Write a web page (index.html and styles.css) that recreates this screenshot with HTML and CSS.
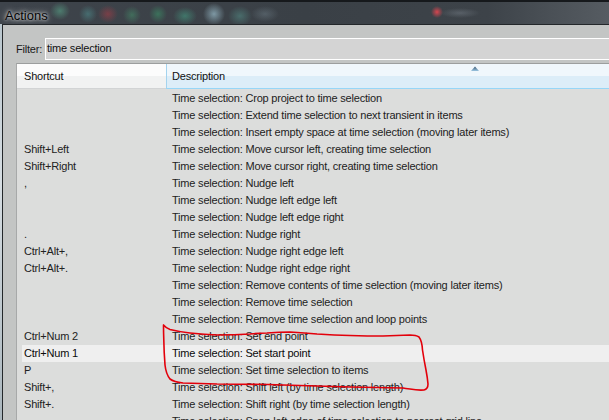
FILE: index.html
```html
<!DOCTYPE html>
<html>
<head>
<meta charset="utf-8">
<link rel="stylesheet" href="styles.css">
</head>
<body>
<div class="window">
  <div class="titlebar"><span class="title">Actions</span></div>
  <div class="frame">
    <div class="dialog">
      <div class="filter-row">
        <span class="filter-label">Filter:</span>
        <div class="filter-box">time selection</div>
      </div>
      <div class="list">
        <div class="list-header">
          <div class="hcell hcell-shortcut">Shortcut</div>
          <div class="hcell hcell-desc">Description
            <svg class="sort-arrow" width="8" height="5" viewBox="0 0 8 5"><defs><linearGradient id="ag" x1="0" y1="0" x2="0" y2="1"><stop offset="0" stop-color="#35536e"/><stop offset="1" stop-color="#9cc7e4"/></linearGradient></defs><polygon points="0,5 4,0.5 8,5" fill="url(#ag)"/></svg>
          </div>
        </div>
        <div class="rows">
          <div class="row"><span class="sc"></span><span class="ds">Time selection: Crop project to time selection</span></div>
          <div class="row"><span class="sc"></span><span class="ds">Time selection: Extend time selection to next transient in items</span></div>
          <div class="row"><span class="sc"></span><span class="ds">Time selection: Insert empty space at time selection (moving later items)</span></div>
          <div class="row"><span class="sc">Shift+Left</span><span class="ds">Time selection: Move cursor left, creating time selection</span></div>
          <div class="row"><span class="sc">Shift+Right</span><span class="ds">Time selection: Move cursor right, creating time selection</span></div>
          <div class="row"><span class="sc">,</span><span class="ds">Time selection: Nudge left</span></div>
          <div class="row"><span class="sc"></span><span class="ds">Time selection: Nudge left edge left</span></div>
          <div class="row"><span class="sc"></span><span class="ds">Time selection: Nudge left edge right</span></div>
          <div class="row"><span class="sc">.</span><span class="ds">Time selection: Nudge right</span></div>
          <div class="row"><span class="sc">Ctrl+Alt+,</span><span class="ds">Time selection: Nudge right edge left</span></div>
          <div class="row"><span class="sc">Ctrl+Alt+.</span><span class="ds">Time selection: Nudge right edge right</span></div>
          <div class="row"><span class="sc"></span><span class="ds">Time selection: Remove contents of time selection (moving later items)</span></div>
          <div class="row"><span class="sc"></span><span class="ds">Time selection: Remove time selection</span></div>
          <div class="row"><span class="sc"></span><span class="ds">Time selection: Remove time selection and loop points</span></div>
          <div class="row"><span class="sc">Ctrl+Num 2</span><span class="ds">Time selection: Set end point</span></div>
          <div class="row row-selected"><span class="sc">Ctrl+Num 1</span><span class="ds">Time selection: Set start point</span></div>
          <div class="row"><span class="sc">P</span><span class="ds">Time selection: Set time selection to items</span></div>
          <div class="row"><span class="sc">Shift+,</span><span class="ds">Time selection: Shift left (by time selection length)</span></div>
          <div class="row"><span class="sc">Shift+.</span><span class="ds">Time selection: Shift right (by time selection length)</span></div>
          <div class="row"><span class="sc"></span><span class="ds">Time selection: Snap left edge of time selection to nearest grid line</span></div>
        </div>
      </div>
    </div>
  </div>
</div>
<svg class="annotation" width="609" height="420" viewBox="0 0 609 420">
  <path d="M163.5,325 Q166,328 170,329.5 Q180,332 190,333 Q205,334.5 217,335 Q235,335 250,334 Q260,333 267,333 Q280,332 290,332 Q305,333 317,334 Q335,335 350,335.5 Q368,336 383,336 Q398,335.5 410,335 Q416,335 419,337 Q422,341 422.5,350 Q424,360 426,370 Q427.5,378 428,384 Q428,389 424,390 Q418,390.5 410,389 Q405,388.5 403,388 Q380,387.5 350,387 Q318,386 283,385 Q250,384 217,384 Q200,383.5 183,383 Q174,382 170,379 Q166,374 165,365 Q164,352 163.8,340 Q163.5,331 163.5,325" fill="none" stroke="#e3000b" stroke-width="1.6" stroke-linecap="round" stroke-linejoin="round"/>
</svg>
</body>
</html>
```
FILE: styles.css
```css
html, body {
  margin: 0;
  padding: 0;
}
body {
  width: 609px;
  height: 420px;
  overflow: hidden;
  position: relative;
  background: #3a4047;
  font-family: "Liberation Sans", Arial, sans-serif;
}
.window {
  display: flex;
  flex-direction: column;
  height: 420px;
  overflow: hidden;
}
.titlebar {
  flex: none;
  box-sizing: border-box;
  height: 24px;
  border-top: 2px solid #16191c;
  display: flex;
  align-items: center;
  padding-left: 5px;
  padding-top: 4px;
  background:
    radial-gradient(ellipse 10px 9px at 60px 9px, rgba(90,170,140,0.55), transparent),
    radial-gradient(ellipse 9px 9px at 88px 12px, rgba(80,150,150,0.5), transparent),
    radial-gradient(ellipse 10px 9px at 108px 12px, rgba(170,60,70,0.55), transparent),
    radial-gradient(ellipse 9px 9px at 132px 13px, rgba(70,150,110,0.5), transparent),
    radial-gradient(ellipse 9px 9px at 158px 12px, rgba(60,160,110,0.5), transparent),
    radial-gradient(ellipse 12px 9px at 185px 14px, rgba(70,170,140,0.5), transparent),
    radial-gradient(ellipse 11px 11px at 214px 12px, rgba(170,210,225,0.6), transparent),
    radial-gradient(ellipse 12px 10px at 240px 14px, rgba(90,160,150,0.45), transparent),
    radial-gradient(ellipse 14px 8px at 265px 12px, rgba(130,150,160,0.35), transparent),
    radial-gradient(ellipse 6px 6px at 437px 10px, rgba(230,70,80,0.9), transparent),
    radial-gradient(ellipse 20px 5px at 460px 11px, rgba(140,150,160,0.35), transparent),
    linear-gradient(to right, #3e444b 0%, #3a4046 50%, #3d4349 80%, #565c62 100%);
}
.title {
  font-size: 13px;
  color: #050505;
  text-shadow: 0 0 6px rgba(255,255,255,0.9), 0 0 3px rgba(255,255,255,0.8);
}
.frame {
  flex: 1;
  min-height: 0;
  display: flex;
  padding-left: 2px;
  overflow: hidden;
  background: linear-gradient(to bottom, #b9c6cd, #d6dde2 40%, #aab6bd);
}
.dialog {
  flex: 1;
  min-height: 0;
  display: flex;
  flex-direction: column;
  overflow: hidden;
  border-left: 1px solid #23272a;
  border-top: 1px solid #23272a;
  background: #c3c5c4;
  padding-top: 13px;
  font-size: 11px;
  letter-spacing: -0.2px;
  color: #1a1a1a;
}
.filter-row {
  flex: none;
  display: flex;
  align-items: center;
  height: 22px;
  padding-left: 13px;
}
.filter-label {
  width: 29px;
  color: #1a1a1a;
}
.filter-box {
  flex: 1;
  box-sizing: border-box;
  height: 22px;
  line-height: 19px;
  border-top: 1px solid #fff;
  border-left: 1px solid #fff;
  border-bottom: 1px solid #fff;
  background: #d4d4d4;
  padding-left: 1px;
  color: #111;
}
.list {
  flex: 1;
  min-height: 0;
  margin-top: 3px;
  margin-left: 13px;
  border-top: 1px solid #9c9e9e;
  border-left: 1px solid #a7a9a9;
  background: #dcdddc;
  overflow: hidden;
}
.list-header {
  display: flex;
  height: 24px;
  border-bottom: 1px solid #d2d4d5;
}
.hcell {
  display: flex;
  align-items: center;
  color: #111;
}
.hcell-shortcut {
  width: 142px;
  padding-left: 7px;
  background: linear-gradient(to bottom, #fcfcfc 0%, #fcfcfc 48%, #f1f2f2 52%, #f1f2f2 100%);
}
.hcell-desc {
  position: relative;
  flex: 1;
  padding-left: 5px;
  border-left: 1px solid #a4d3ee;
  margin-bottom: -1px;
  border-bottom: 1px solid #96d6f7;
  background: linear-gradient(to bottom, #f0f7fc 0%, #f0f7fc 48%, #dcedf8 52%, #dcedf8 100%);
}
.sort-arrow {
  position: absolute;
  left: 304px;
  top: 2px;
}
.rows {
  padding-top: 1px;
}
.row {
  display: flex;
  height: 17px;
  line-height: 17px;
  margin-left: 5px;
  color: #222;
  white-space: nowrap;
}
.row-selected {
  background: #efefef;
  color: #0a0a0a;
}
.sc {
  width: 142px;
  padding-left: 2px;
  flex: none;
}
.ds {
  padding-left: 6px;
}
.annotation {
  position: absolute;
  left: 0;
  top: 0;
  pointer-events: none;
}
```
